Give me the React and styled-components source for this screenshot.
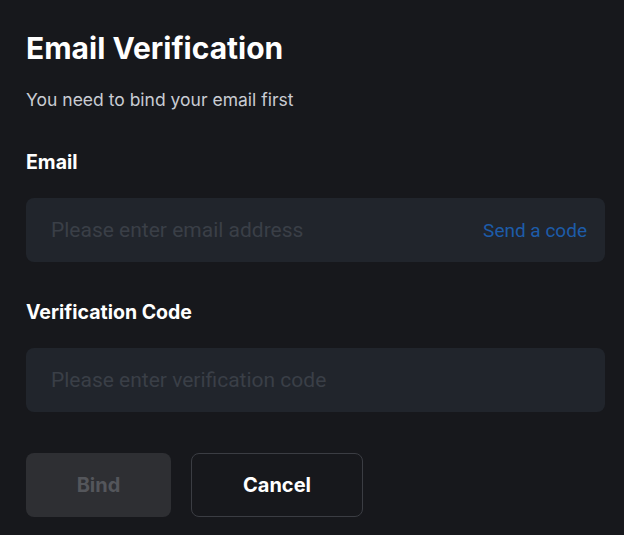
import styled, { createGlobalStyle } from "styled-components";

const GlobalStyle = createGlobalStyle`
  html, body {
    margin: 0;
    padding: 0;
    background: #17181c;
  }
  body {
    font-family: Inter, "Noto Sans", sans-serif;
  }
`;

const App = () => {
  return (
    <>
      <GlobalStyle />
      <Panel>
        <Title>Email Verification</Title>
        <Subtitle>You need to bind your email first</Subtitle>

        <Field>
          <Label>Email</Label>
          <InputBox>
            <Input placeholder="Please enter email address" />
            <SendLink>Send a code</SendLink>
          </InputBox>
        </Field>

        <Field>
          <Label>Verification Code</Label>
          <InputBox>
            <Input placeholder="Please enter verification code" />
          </InputBox>
        </Field>

        <Actions>
          <Button disabled>Bind</Button>
          <Button $outline>Cancel</Button>
        </Actions>
      </Panel>
    </>
  );
};

const Panel = styled.div`
  padding: 31px 19px 0 26px;
  display: flex;
  flex-direction: column;
`;

const Title = styled.h1`
  margin: 0;
  font-size: 30px;
  line-height: 34px;
  font-weight: 700;
  color: #ffffff;
`;

const Subtitle = styled.p`
  margin: 23px 0 0;
  font-size: 17.5px;
  line-height: 24px;
  color: #c9ccd3;
`;

const Field = styled.div`
  display: flex;
  flex-direction: column;
  gap: 23px;
  margin-top: 37px;
`;

const Label = styled.label`
  font-size: 19.5px;
  line-height: 26px;
  font-weight: 700;
  color: #ffffff;
`;

const InputBox = styled.div`
  height: 64px;
  background: #21252c;
  border-radius: 8px;
  display: flex;
  align-items: center;
  padding: 0 18px 0 25px;
`;

const Input = styled.input`
  flex: 1;
  min-width: 0;
  background: transparent;
  border: none;
  outline: none;
  padding: 0;
  font-family: Roboto, Inter, sans-serif;
  font-size: 21px;
  color: #ffffff;

  &::placeholder {
    color: #3a3f47;
  }
`;

const SendLink = styled.span`
  font-family: Roboto, Inter, sans-serif;
  font-size: 19px;
  color: #1d5ca9;
  cursor: pointer;
`;

const Actions = styled.div`
  display: flex;
  gap: 20px;
  margin-top: 41px;
`;

const Button = styled.button`
  height: 64px;
  width: ${(p) => (p.$outline ? "172px" : "145px")};
  border-radius: 8px;
  font-family: Inter, sans-serif;
  font-size: 20px;
  font-weight: 700;
  background: ${(p) => (p.$outline ? "transparent" : "#2e2f33")};
  color: ${(p) => (p.$outline ? "#ffffff" : "#54565b")};
  border: ${(p) => (p.$outline ? "1px solid #3b3d43" : "none")};
  cursor: pointer;

  &:disabled {
    cursor: not-allowed;
  }
`;

export default App;
